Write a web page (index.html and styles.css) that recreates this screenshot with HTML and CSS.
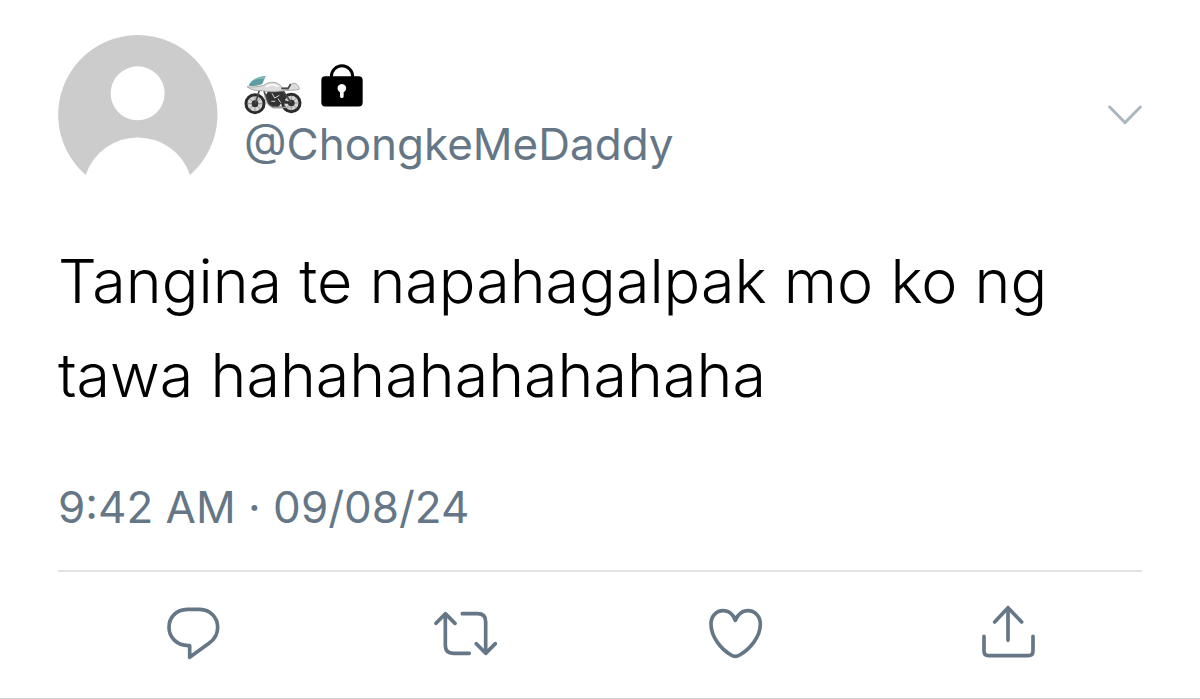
FILE: index.html
```
<!DOCTYPE html>
<html lang="tl">
<head>
    <meta charset="UTF-8">
    <meta name="viewport" content="width=device-width, initial-scale=1.0">
    <title>@ChongkeMeDaddy</title>
    <link rel="stylesheet" href="styles.css">
</head>
<body>
    <article class="tweet">
        <header class="tweet-header">
            <svg class="avatar" viewBox="54 44 480 420" role="img" aria-label="Profile picture">
                <path fill-rule="evenodd" d="M137 464A239 239 0 1 1 450 464A165 165 0 0 0 137 464ZM212 219a81 81 0 1 0 162 0a81 81 0 1 0-162 0Z"/>
            </svg>
            <div class="author">
                <div class="name">
                    <svg class="motorcycle" viewBox="24 58 174 118" role="img" aria-label="Motorcycle">
                        <g fill="#d5d5d5" stroke="#2b2b2b" stroke-width="9">
                            <circle cx="57" cy="143" r="27"/>
                            <circle cx="166" cy="141" r="26"/>
                        </g>
                        <g stroke="#777" stroke-width="2">
                            <path d="M57 120v46M34 143h46M41 127l32 32M73 127l-32 32M166 119v44M144 141h44M150 125l32 32M182 125l-32 32"/>
                        </g>
                        <g fill="#333">
                            <circle cx="57" cy="143" r="10"/>
                            <circle cx="166" cy="141" r="10"/>
                            <path d="M96 106h46l10 14-8 12 20 6v6l-28-2-8 10h-24l-8-14-8-18z"/>
                        </g>
                        <path d="M58 143L72 96M84 106l14 38 14 10h38M142 106l24 34" fill="none" stroke="#4a4a4a" stroke-width="5"/>
                        <path d="M108 112l8 14 14-8M106 136h12M126 128l8 12" fill="none" stroke="#d5d5d5" stroke-width="3"/>
                        <path d="M86 118c2 20 10 32 24 36h60" fill="none" stroke="#aaa" stroke-width="3"/>
                        <path d="M33 92c18 2 36 0 50-4 12-10 36-14 50 0l8 8 18-2c2-8 10-13 18-12 8 2 12 10 13 18-18 4-38 2-56 5-18 4-38 3-54-1-18 1-36-2-47-12z" fill="#dcdcdc" stroke="#8c8c8c" stroke-width="2"/>
                        <path d="M90 92c12-7 26-7 36 0" fill="none" stroke="#fff" stroke-width="5"/>
                        <path d="M136 97l20 1 8-14" fill="none" stroke="#444" stroke-width="5"/>
                        <path d="M38 89C44 74 62 63 89 60l-10 24c-12 5-27 7-41 5z" fill="#5e9ea3"/>
                        <path d="M46 76c10-9 25-15 43-16l-4 9c-14-1-28 1-39 7z" fill="#7fb8ba"/>
                    </svg>
                    <svg class="lock" viewBox="256 24 126 128" role="img" aria-label="Protected account">
                        <path d="M287 66V61a32 32 0 0 1 64 0v5" fill="none" stroke="#000" stroke-width="9"/>
                        <rect x="257" y="60" width="124" height="91" rx="12"/>
                        <path d="M313 108a13 13 0 1 1 11 0v12a5 5 0 0 1-11 0z" fill="#fff"/>
                    </svg>
                </div>
                <a class="handle" href="#">@ChongkeMeDaddy</a>
            </div>
            <button class="menu" type="button" aria-label="More">
                <svg viewBox="53 45 102 60"><path d="M58 51l46 47 46-47"/></svg>
            </button>
        </header>
        <p class="text">Tangina te napahagalpak mo ko ng tawa hahahahahahahaha</p>
        <time class="date" datetime="2024-08-09T09:42">9:42 AM · 09/08/24</time>
        <footer class="actions">
            <button type="button" aria-label="Reply">
                <svg viewBox="36 40 192 180"><path d="M115 168C80 167 57 143 57 113C57 82 79 60 112 59H149C181 60 203 83 203 113C203 135 193 150 177 161L119 203V168Z"/></svg>
            </button>
            <button type="button" aria-label="Retweet">
                <svg viewBox="36 40 192 180"><path d="M45 101l28-29 29 29M73 74v93q0 24 24 24h48M124 72h46q24 0 24 24v93M166 162l28 29 29-29"/></svg>
            </button>
            <button type="button" aria-label="Like">
                <svg viewBox="26 40 192 180"><path d="M120 92C113 73 100 63 84 63C62 63 47 80 47 103C47 142 77 178 107 196Q120 204 133 196C164 178 195 142 195 103C195 80 179 63 157 63C141 63 128 73 120 92Z"/></svg>
            </button>
            <button type="button" aria-label="Share">
                <svg viewBox="30 40 192 180"><path d="M57 140v44q0 14 14 14h119q14 0 14-14v-44M129 152V54M89 97l40-43 41 43"/></svg>
            </button>
        </footer>
    </article>
</body>
</html>
```
FILE: styles.css
```
* {
    box-sizing: border-box;
}
body {
    margin: 0;
    background: #fff;
    color: #000;
    font-family: 'Inter', sans-serif;
}
.tweet {
    padding: 35px 58px;
    border-bottom: 1px solid #ccd1d3;
}
.tweet-header {
    display: flex;
    align-items: flex-start;
    gap: 26px;
}
.avatar {
    width: 160px;
    height: 140px;
    flex: none;
    fill: #ccc;
}
.author {
    flex: 1;
    padding-top: 28px;
}
.name {
    display: flex;
    align-items: flex-start;
    gap: 19px;
    height: 53px;
}
.motorcycle {
    width: 58px;
    height: 40px;
    margin-top: 12px;
}
.lock {
    width: 42px;
    height: 43px;
    margin-top: 1px;
}
.handle {
    display: block;
    color: #657786;
    font-size: 44px;
    line-height: 56px;
    text-decoration: none;
}
button {
    padding: 0;
    border: none;
    background: none;
    cursor: pointer;
}
button svg {
    display: block;
    fill: none;
    stroke: #657786;
    stroke-width: 11;
    stroke-linecap: round;
    stroke-linejoin: round;
}
.menu {
    align-self: center;
    padding-top: 20px;
}
.menu svg {
    width: 34px;
    height: 20px;
    stroke: #aab8c2;
    stroke-width: 9;
}
.text {
    margin: 59px 0 57px;
    font-size: 61px;
    font-weight: 300;
    line-height: 94px;
}
.date {
    display: block;
    color: #657786;
    font-size: 44px;
    line-height: 56px;
}
.actions {
    display: grid;
    grid-template-columns: repeat(4, 1fr);
    justify-items: center;
    margin-top: 35px;
    padding-top: 31px;
    border-top: 2px solid #e1e4e6;
}
.actions svg {
    width: 64px;
    height: 60px;
}
```
